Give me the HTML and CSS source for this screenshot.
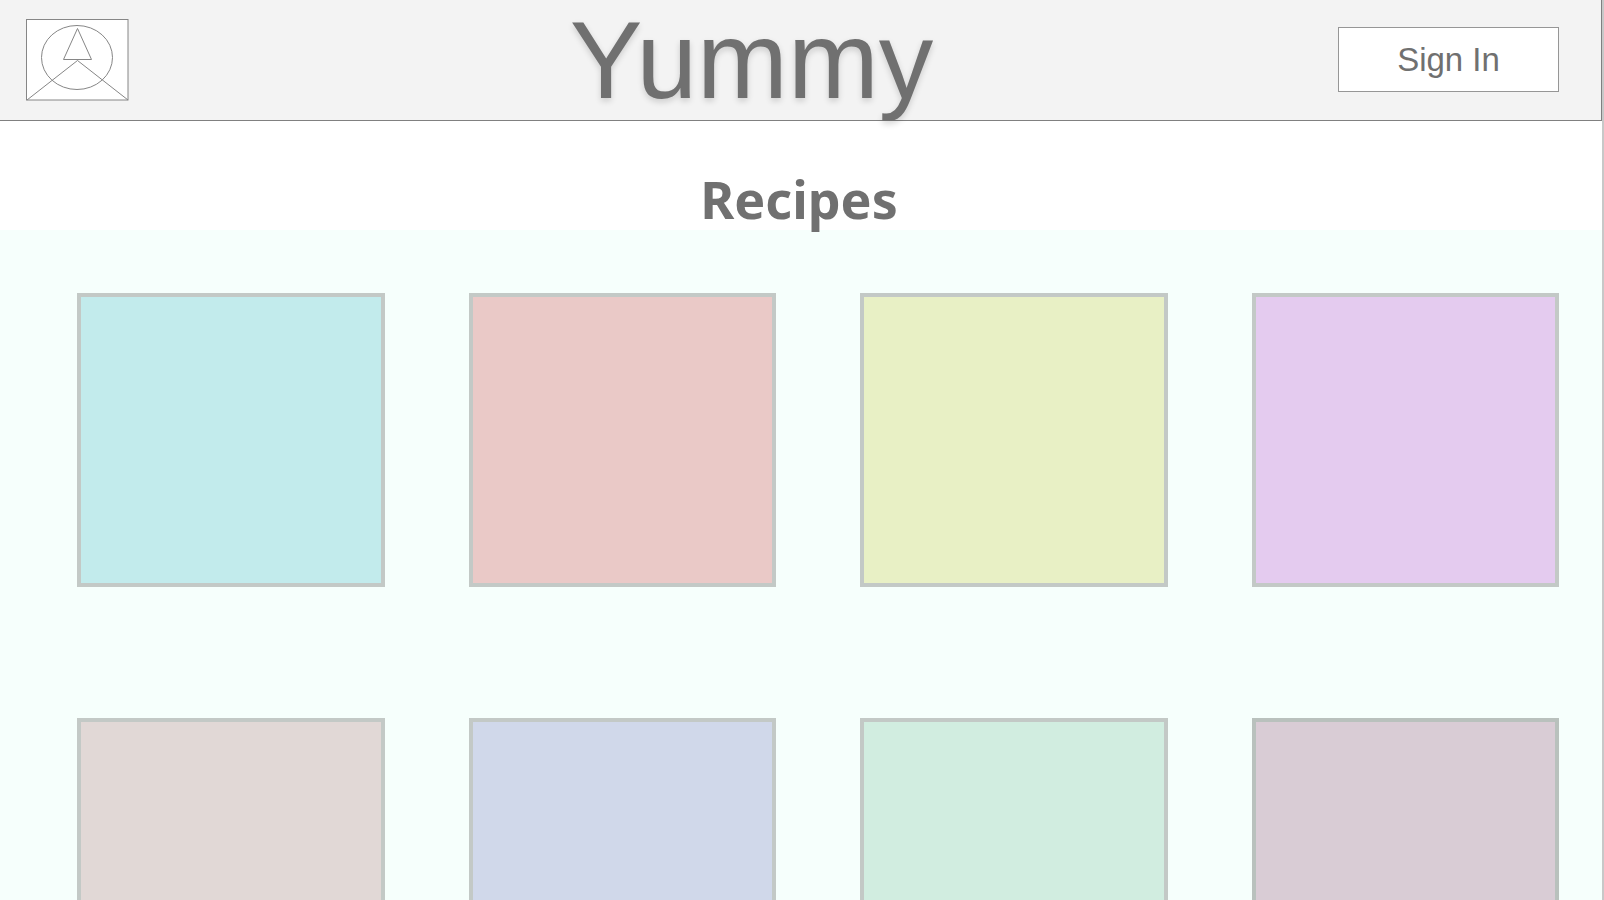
FILE: index.html
```html
<!DOCTYPE html>
<html lang="en">
<head>
<meta charset="utf-8">
<title>Yummy</title>
<link rel="stylesheet" href="styles.css">
</head>
<body>
<header class="topbar">
  <a class="logo" href="#" aria-label="Home">
    <svg viewBox="0 0 103 82" fill="none" stroke="#868686" stroke-width="1">
      <rect x="0.5" y="0.5" width="101.500" height="80.500" fill="#fff"/>
      <ellipse cx="51" cy="38.500" rx="35.500" ry="32"/>
      <path d="M51.500 9.500L65.500 40.500H37.500Z"/>
      <path d="M1 81L51.500 41.500L102 81"/>
    </svg>
  </a>
  <h1 class="brand">Yummy</h1>
  <button class="signin" type="button">Sign In</button>
</header>
<main class="content">
  <h2 class="title">Recipes</h2>
  <section class="recipes" aria-label="Recipes">
    <article class="card aqua"></article>
    <article class="card rose"></article>
    <article class="card lime"></article>
    <article class="card lilac"></article>
    <article class="card sand"></article>
    <article class="card blue"></article>
    <article class="card mint"></article>
    <article class="card mauve"></article>
  </section>
</main>
</body>
</html>
```
FILE: styles.css
```css
* { box-sizing: border-box; }
html { height: 100%; overflow: hidden; }
body {
  height: 100%;
  margin: 0;
  overflow: hidden;
  border-right: 2px solid #c8c8c8;
  background: #fff;
  color: #707070;
  font-family: "Liberation Sans", Arial, sans-serif;
}
.topbar {
  display: grid;
  grid-template-columns: 221px 1fr 221px;
  align-items: center;
  height: 121px;
  padding: 0 42px 0 26px;
  background: #f3f3f3;
  border: solid #808080;
  border-width: 0 1px 1px 0;
}
.logo { width: 103px; height: 82px; }
.logo svg { display: block; width: 100%; height: 100%; }
.brand {
  margin: 0;
  padding-right: 82px;
  font-size: 109px;
  font-weight: 400;
  line-height: 120px;
  text-align: center;
  text-shadow: 0 3px 6px rgba(0, 0, 0, .16);
}
.signin {
  height: 65px;
  margin-bottom: 2px;
  padding: 2px 0 0;
  border: 1px solid #969696;
  background: #fff;
  color: #707070;
  font: 33px "Liberation Sans", Arial, sans-serif;
}
.title {
  margin: 0;
  padding: 47px 4px 0 0;
  font: bold 52px/62px "Noto Sans", sans-serif;
  text-align: center;
}
.recipes {
  display: grid;
  grid-template-columns: repeat(4, 1fr);
  gap: 131px 84px;
  padding: 63px 43px 63px 77px;
  background: #f6fffc;
}
.card { height: 294px; border: 4px solid #c3c9c6; }
.aqua { background: #c2ebec; }
.rose { background: #eac9c7; }
.lime { background: #e8f0c5; }
.lilac { background: #e4cbef; }
.sand { background: #e1d8d6; }
.blue { background: #d0d8ea; }
.mint { background: #d1ede0; }
.mauve { background: #d9ccd5; border-color: #b9c1bd; }
```
